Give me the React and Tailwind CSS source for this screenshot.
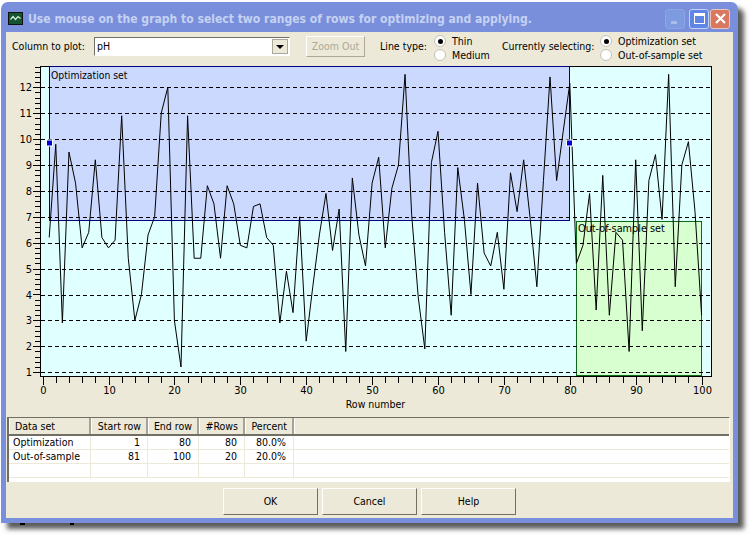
import React from "react";

const data = [
  6.2, 9.8, 2.9, 9.5, 8.3, 5.8, 6.4, 9.2, 6.2, 5.8,
  6.1, 10.9, 5.4, 3.0, 4.0, 6.3, 7.0, 11.0, 12.0, 3.0,
  1.2, 10.9, 5.4, 5.4, 8.2, 7.5, 5.4, 8.2, 7.5, 5.9,
  5.8, 7.4, 7.5, 6.2, 5.9, 2.9, 4.9, 3.3, 7.0, 2.2,
  4.3, 6.3, 7.9, 5.7, 7.3, 1.8, 8.5, 6.3, 5.1, 8.3,
  9.3, 5.8, 8.1, 9.0, 12.5, 7.1, 3.9, 1.9, 9.1, 10.3,
  6.4, 3.2, 8.9, 6.9, 4.0, 8.3, 5.6, 5.1, 6.4, 4.2,
  8.7, 7.2, 9.2, 6.9, 4.3, 8.4, 12.4, 8.4, 10.3, 12.15,
  5.2, 5.9, 7.9, 3.4, 8.6, 3.2, 6.4, 6.1, 1.8, 9.2,
  2.6, 8.4, 9.4, 6.9, 12.5, 4.3, 9.0, 9.9, 7.2, 3.2,
];

// chart svg sits at page x=12, y=66
const px = (row) => 30.6 + row * 6.59;
const py = (v) => 21.3 + (12 - v) * 25.9;
const linePoints = data.map((v, i) => `${px(i + 1)},${py(v)}`).join(" ");
const yTicks = [12, 11, 10, 9, 8, 7, 6, 5, 4, 3, 2, 1];
const minorY = [];
for (let v = 1; v <= 12.9; v += 0.2) minorY.push(v);
const xTicks = [];
for (let r = 0; r <= 100; r += 2) xTicks.push(r);
const xLabels = [0, 10, 20, 30, 40, 50, 60, 70, 80, 90, 100];

function Chart() {
  return (
    <svg width="704" height="345" className="block shrink-0" style={{ fontFamily: "'DejaVu Sans Condensed', 'DejaVu Sans', sans-serif" }}>
      <rect x="28.5" y="0.5" width="671" height="310" fill="#e0ffff" stroke="#000" />
      <rect x="37.5" y="0.5" width="520" height="154" fill="#ccd9ff" stroke="#000080" />
      <rect x="564.5" y="155.5" width="125" height="154" fill="#d7ffd0" stroke="#0a6a1a" />
      {yTicks.map((v) => (
        <line key={v} x1="29" x2="699" y1={Math.round(py(v)) + 0.5} y2={Math.round(py(v)) + 0.5} stroke="#000" strokeDasharray="4 3" />
      ))}
      {minorY.map((v) => {
        const major = Math.abs(v - Math.round(v)) < 0.01;
        return <line key={v} x1={major ? 21 : 23} x2="28" y1={Math.round(py(v)) + 0.5} y2={Math.round(py(v)) + 0.5} stroke="#000" />;
      })}
      {yTicks.map((v) => (
        <text key={v} x="20" y={py(v) + 4} textAnchor="end" fontSize="11" fill="#000">{v}</text>
      ))}
      <polyline points={linePoints} fill="none" stroke="#000" strokeWidth="1" />
      <text x="39" y="13" fontSize="10.3" fill="#000">Optimization set</text>
      <text x="566" y="166" fontSize="10.8" fill="#000">Out-of-sample set</text>
      <rect x="34.5" y="74" width="6" height="6" fill="#0000d0" stroke="#fff" />
      <rect x="554.5" y="74" width="6" height="6" fill="#0000d0" stroke="#fff" />
      <line x1="29" x2="700" y1="310.5" y2="310.5" stroke="#000" />
      {xTicks.map((r) => {
        const tx = Math.round(px(r)) + 0.5;
        return <line key={r} x1={tx} x2={tx} y1="311" y2="317" stroke="#000" />;
      })}
      {xLabels.map((r) => {
        const tx = Math.round(px(r)) + 0.5;
        return (
          <g key={r}>
            <line x1={tx} x2={tx} y1="311" y2="319" stroke="#000" />
            <text x={tx} y="328" textAnchor="middle" fontSize="11" fill="#000">{r}</text>
          </g>
        );
      })}
      <text x="363.5" y="342" textAnchor="middle" fontSize="10.5" fill="#000">Row number</text>
    </svg>
  );
}

function Radio({ checked, label }) {
  return (
    <label className="flex items-center gap-[6px] h-[14px]">
      <span className="w-[12px] h-[12px] rounded-full border border-[#c4c2b4] bg-white flex items-center justify-center shrink-0">
        {checked && <span className="w-[5px] h-[5px] rounded-full bg-black" />}
      </span>
      <span className="whitespace-nowrap">{label}</span>
    </label>
  );
}

function XpButton({ label }) {
  return (
    <button className="w-[95px] h-[27px] bg-[#ece9d8] border border-t-white border-l-white border-r-[#716f64] border-b-[#716f64] text-black">
      {label}
    </button>
  );
}

const rows = [
  ["Optimization", "1", "80", "80", "80.0%"],
  ["Out-of-sample", "81", "100", "20", "20.0%"],
  ["", "", "", "", ""],
];
const headers = ["Data set", "Start row", "End row", "#Rows", "Percent"];
const colWidths = ["w-[82px]", "w-[57px]", "w-[51px]", "w-[46px]", "w-[49px]"];

function DataTable() {
  return (
    <div className="ml-[1px] mr-[3px] h-[65px] overflow-hidden border-t border-l-2 border-t-[#716f64] border-l-[#716f64] border-r border-r-white bg-white">
      <div className="flex h-[18px] bg-[#ece9d8] border-b-2 border-[#716f64]">
        {headers.map((h, i) => (
          <div key={h} className={`${colWidths[i]} shrink-0 border-r-2 border-[#a5a397] border-l border-l-white leading-[17px] ${i === 0 ? "pl-[5px] text-left" : "pr-[5px] text-right"}`}>
            {h}
          </div>
        ))}
        <div className="flex-1 border-l border-l-white" />
      </div>
      {rows.map((r, idx) => (
        <div key={idx} className="flex h-[14px] border-b border-[#ece9d8]">
          {r.map((c, i) => (
            <div key={i} className={`${colWidths[i]} shrink-0 border-r border-[#ece9d8] ${i === 0 ? "pl-[4px] text-left" : "pr-[7px] text-right"}`}>
              {c}
            </div>
          ))}
        </div>
      ))}
    </div>
  );
}

export default function App() {
  return (
    <div className="relative w-[753px] h-[538px] bg-white overflow-hidden pt-[2px] pl-[1px] text-[10.5px] text-black leading-[13px]" style={{ fontFamily: "'DejaVu Sans Condensed', 'DejaVu Sans', sans-serif" }}>
      <div className="w-[737px] h-[521px] rounded-t-[7px] bg-[#7a8fdc] shadow-[6px_6px_5px_rgba(50,50,50,0.8)] flex flex-col px-[5px] pb-[5px]">
        {/* Title bar */}
        <div className="h-[30px] shrink-0 flex items-center pt-[3px] pl-[2px] pr-[3px]">
          <svg width="15" height="13" viewBox="0 0 15 13" className="shrink-0">
            <rect x="0.5" y="0.5" width="14" height="12" fill="#14552f" stroke="#111" />
            <path d="M2.5 7.5 L5 4.5 L7.5 7.5 L10 4.5 L12.5 6.5" fill="none" stroke="#d8f0d8" strokeWidth="1.2" />
          </svg>
          <span className="ml-[5px] mt-[1px] text-[12.05px] font-bold text-[#c5d2f2] whitespace-nowrap">
            Use mouse on the graph to select two ranges of rows for optimizing and applying.
          </span>
          <div className="ml-auto flex">
            <div className="w-[20px] h-[20px] rounded-[3px] bg-[#7f9be0] border border-[#8ba5e6] flex items-end pl-[5px] pb-[4px]">
              <span className="w-[6px] h-[3px] bg-[#a9bcee]" />
            </div>
            <div className="ml-[4px] w-[20px] h-[20px] rounded-[3px] bg-[#5f86e6] border border-[#c5d2f2] flex items-center justify-center">
              <span className="w-[11px] h-[11px] border border-t-[3px] border-white" />
            </div>
            <div className="ml-[1px] w-[20px] h-[20px] rounded-[3px] bg-[#d9775f] border border-[#e8c5c0] flex items-center justify-center">
              <svg width="13" height="13" viewBox="0 0 13 13">
                <path d="M2 2 L11 11 M11 2 L2 11" stroke="#fff" strokeWidth="2.2" />
              </svg>
            </div>
          </div>
        </div>

        {/* Dialog body */}
        <div className="flex-1 min-h-0 bg-[#ece9d8] flex flex-col">
          {/* Toolbar */}
          <div className="h-[34px] shrink-0 flex items-center pl-[6px] pb-[5px]">
            <span className="w-[82px] shrink-0">Column to plot:</span>
            <div className="w-[196px] h-[19px] bg-white border border-[#716f64] border-r-white border-b-white flex items-center justify-between shrink-0 pl-[2px] pr-[1px]">
              <span>pH</span>
              <span className="w-[16px] h-[15px] bg-[#ece9d8] border border-[#aca899] flex items-center justify-center">
                <span className="w-0 h-0 border-x-[4px] border-x-transparent border-t-[4px] border-t-black" />
              </span>
            </div>
            <button className="ml-[16px] w-[59px] h-[21px] bg-[#ece9d8] border border-t-white border-l-white border-r-[#aca899] border-b-[#aca899] text-[#aca899] shrink-0">
              Zoom Out
            </button>
            <span className="ml-[15px] w-[54px] shrink-0">Line type:</span>
            <div className="w-[68px] shrink-0 mt-[3px]">
              <Radio checked label="Thin" />
              <Radio label="Medium" />
            </div>
            <span className="w-[98px] shrink-0">Currently selecting:</span>
            <div className="shrink-0 mt-[3px]">
              <Radio checked label="Optimization set" />
              <Radio label="Out-of-sample set" />
            </div>
          </div>

          {/* Plot */}
          <div className="pl-[6px]">
            <Chart />
          </div>

          {/* Table */}
          <div className="mt-[6px]">
            <DataTable />
          </div>

          {/* Buttons */}
          <div className="flex-1 flex items-center justify-center gap-[4px] pt-[3px]">
            <XpButton label="OK" />
            <XpButton label="Cancel" />
            <XpButton label="Help" />
          </div>
        </div>
      </div>
      {/* bits of the window behind, peeking under the bottom edge */}
      <span className="absolute left-[20px] top-[523px] w-[5px] h-[2px] bg-black" />
      <span className="absolute left-[70px] top-[523px] w-[4px] h-[2px] bg-black" />
    </div>
  );
}
